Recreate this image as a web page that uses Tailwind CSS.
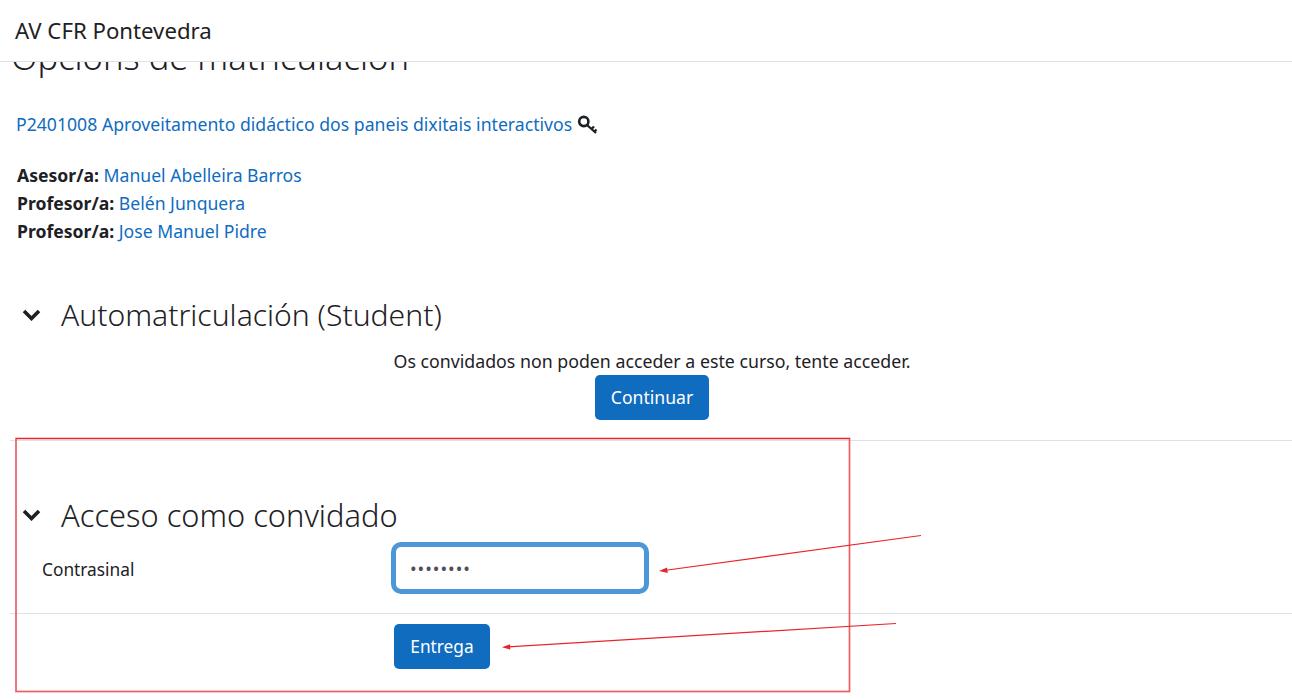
<!DOCTYPE html>
<html>
  <head>
    <title>Opcións de matriculación</title>
    <script src="https://cdn.jsdelivr.net/npm/@tailwindcss/browser@4"></script>
  </head>
  <body class="bg-white text-[#1d2125] font-['Noto_Sans',sans-serif] text-[17.6px] overflow-hidden">
    <div class="relative h-[700px] w-[1292px] overflow-hidden">
      <!-- top bar sits over the scrolled page title -->
      <nav class="absolute top-0 left-0 z-10 flex h-[62px] w-full items-center border-b border-[#dee2e6] bg-white pl-[15px] text-[22.2px] text-[#1d2125]">
        AV CFR Pontevedra
      </nav>

      <main class="pt-[36px]">
        <h2 class="pl-[11px] text-[34.5px] leading-[42px] font-light">Opcións de matriculación</h2>

        <div class="mt-[32px] flex h-[28px] items-center pl-[16px]">
          <a href="#" class="text-[17.65px] text-[#0f6cbf]">P2401008 Aproveitamento didáctico dos paneis dixitais interactivos</a>
          <svg class="ml-[5px]" width="21" height="21" viewBox="0 0 21 21" fill="none" stroke="#1d2125" stroke-width="2.6">
            <circle cx="6.800" cy="7.500" r="4.600" />
            <path d="M10 11l9 8M14.500 15l2.500-2.500M17.500 17.500l2-2" stroke-width="2.300" />
          </svg>
        </div>

        <ul class="mt-[23px] pl-[17px] leading-[28px]">
          <li><strong class="font-bold">Asesor/a:</strong> <a href="#" class="text-[#0f6cbf]">Manuel Abelleira Barros</a></li>
          <li><strong class="font-bold">Profesor/a:</strong> <a href="#" class="text-[#0f6cbf]">Belén Junquera</a></li>
          <li><strong class="font-bold">Profesor/a:</strong> <a href="#" class="text-[#0f6cbf]">Jose Manuel Pidre</a></li>
        </ul>

        <section class="mt-[48px]">
          <h3 class="flex h-[44px] items-center pl-[22px] text-[30.1px] font-light">
            <svg width="19" height="12" viewBox="0 0 19 12" fill="none" stroke="#1d2125" stroke-width="3.600">
              <path d="M2 2l7.500 7.500L17 2" />
            </svg>
            <span class="ml-[20px]">Automatriculación (Student)</span>
          </h3>
          <p class="mt-[10px] pl-[12px] text-center text-[17.75px] leading-[28px]">Os convidados non poden acceder a este curso, tente acceder.</p>
          <div class="flex justify-center pl-[12px]">
            <button class="h-[45px] w-[114px] rounded-[5px] bg-[#0f6cbf] text-white">Continuar</button>
          </div>
          <hr class="mt-[20px] ml-[10px] border-[#dee2e6]" />
        </section>

        <section class="mt-[52px]">
          <h3 class="flex h-[44px] items-center pl-[22px] text-[30.8px] font-light">
            <svg width="19" height="12" viewBox="0 0 19 12" fill="none" stroke="#1d2125" stroke-width="3.600">
              <path d="M2 2l7.500 7.500L17 2" />
            </svg>
            <span class="ml-[20px]">Acceso como convidado</span>
          </h3>
          <div class="mt-[5px] flex items-center">
            <label for="pw" class="w-[391px] pt-[4px] pl-[42px] text-[17.3px]">Contrasinal</label>
            <input id="pw" type="password" value="12345678" class="h-[52px] w-[258px] rounded-[10px] border-[5px] border-[#4c96d9] bg-white px-[14px] tracking-[1px] text-[#495057] outline-none" />
          </div>
          <hr class="mt-[19px] ml-[10px] border-[#dee2e6]" />
          <div class="mt-[10px] pl-[394px]">
            <button class="h-[45px] w-[96px] rounded-[5px] bg-[#0f6cbf] text-[17.3px] text-white">Entrega</button>
          </div>
        </section>
      </main>

      <!-- red annotations drawn on top of the screenshot -->
      <svg class="absolute top-0 left-0 z-20" width="1292" height="700" viewBox="0 0 1292 700" fill="none">
        <rect x="16" y="438.500" width="833.500" height="253" stroke="#ec5f63" stroke-width="1.700" />
        <path d="M16 438.500H850" stroke="#e8252b" stroke-width="1" />
        <path d="M921 535.500L664 570.500" stroke="#e8252b" stroke-width="1.200" />
        <path d="M659 571l8-3.500.8 5.500z" fill="#e8252b" />
        <path d="M896 623.500L507 647" stroke="#e8252b" stroke-width="1.200" />
        <path d="M502 647.200l8-3 .3 5.500z" fill="#e8252b" />
      </svg>
    </div>
  </body>
</html>
